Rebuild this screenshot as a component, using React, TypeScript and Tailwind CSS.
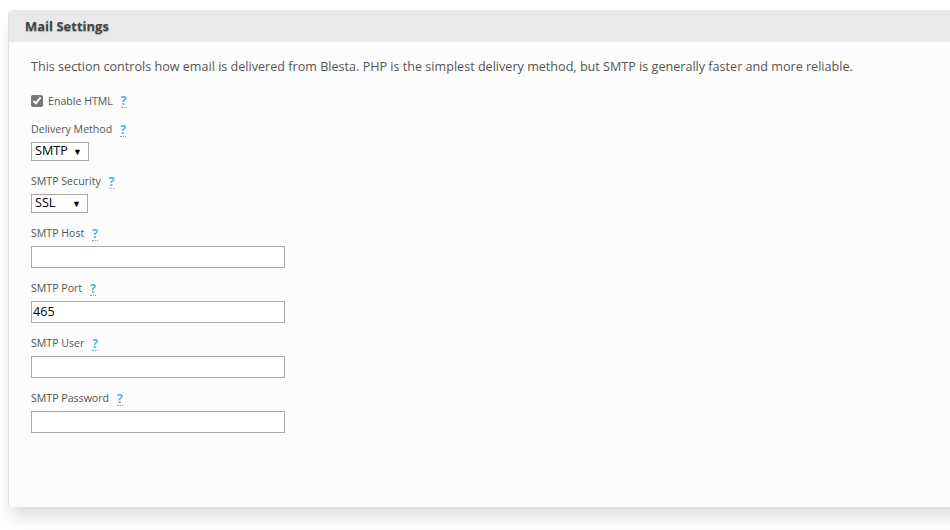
import React from 'react';

const font = { fontFamily: '"Open Sans", "Noto Sans", sans-serif' };

function Help() {
  return (
    <span className="ml-[8px] inline-block border-b border-dotted border-[#4fb6d8] text-[12px] font-bold leading-[13px] text-[#4fb6d8]">
      ?
    </span>
  );
}

function Label({ text }: { text: string }) {
  return (
    <div className="flex h-[16px] items-center pt-[2px] text-[10.6px] text-[#555]">
      <span>{text}</span>
      <Help />
    </div>
  );
}

function FakeSelect({ value, width }: { value: string; width: string }) {
  return (
    <div
      className={`mt-[5px] flex h-[19px] ${width} items-center justify-between border border-[#a9a9a9] bg-white pl-[3px] pr-[6px] text-[12.6px] text-black`}
    >
      <span>{value}</span>
      <span className="text-[9px]">▼</span>
    </div>
  );
}

function TextField({ value = '' }: { value?: string }) {
  return (
    <div className="mt-[5px] flex h-[22px] w-[254px] items-center border border-[#a9a9a9] bg-white px-[1px] text-[12.6px] text-black">
      {value}
    </div>
  );
}

export default function App() {
  return (
    <div className="h-[530px] w-[950px] overflow-hidden bg-white pl-[8px] pt-[10px]" style={font}>
      <div className="flex h-[497px] w-[960px] flex-col rounded-tl-[4px] rounded-bl-[3px] border-l border-[#e2e2e2] bg-[#fcfcfc] shadow-[0_14px_16px_-4px_rgba(0,0,0,0.14)]">
        <div className="flex h-[32px] items-center rounded-tl-[4px] bg-[#e9e9e9] pl-[16px] pt-[1px]">
          <h2 className="text-[13px] font-bold text-[#444] [text-shadow:0_1px_1px_rgba(0,0,0,0.3)]">
            Mail Settings
          </h2>
        </div>
        <div className="px-[22px] pt-[16px]">
          <p className="text-[12.6px] leading-[18px] text-[#555]">
            This section controls how email is delivered from Blesta. PHP is the simplest delivery method, but SMTP is
            generally faster and more reliable.
          </p>

          <div className="mt-[17px] flex h-[16px] items-center text-[10.6px] text-[#555]">
            <input type="checkbox" defaultChecked className="m-0 mr-[5px] h-[12px] w-[12px] accent-[#777]" />
            <span className="pt-[2px]">Enable HTML</span>
            <span className="pt-[2px]">
              <Help />
            </span>
          </div>

          <div className="mt-[12px]">
            <Label text="Delivery Method" />
            <FakeSelect value="SMTP" width="w-[58px]" />
          </div>

          <div className="mt-[12px]">
            <Label text="SMTP Security" />
            <FakeSelect value="SSL" width="w-[57px]" />
          </div>

          <div className="mt-[12px]">
            <Label text="SMTP Host" />
            <TextField />
          </div>

          <div className="mt-[12px]">
            <Label text="SMTP Port" />
            <TextField value="465" />
          </div>

          <div className="mt-[12px]">
            <Label text="SMTP User" />
            <TextField />
          </div>

          <div className="mt-[12px]">
            <Label text="SMTP Password" />
            <TextField />
          </div>
        </div>
      </div>
    </div>
  );
}
